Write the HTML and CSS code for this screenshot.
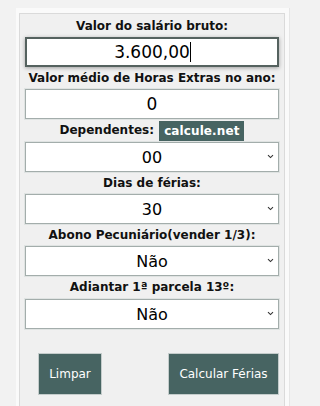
FILE: index.html
```html
<!DOCTYPE html>
<html lang="pt-BR">
<head>
<meta charset="utf-8">
<title>Calculadora de Férias</title>
<link rel="stylesheet" href="styles.css">
</head>
<body>
<div class="wrap">
  <form class="panel">
    <label class="lbl">Valor do salário bruto:</label>
    <div class="field">
      <input class="ctl ctl-focus" type="text" value="3.600,00">
      <span class="caret"></span>
    </div>
    <label class="lbl">Valor médio de Horas Extras no ano:</label>
    <input class="ctl" type="text" value="0">
    <label class="lbl lbl-badge">Dependentes: <span class="badge">calcule.net</span></label>
    <div class="field">
      <select class="ctl sel"><option>00</option></select>
      <svg class="chev" width="7" height="5" viewBox="0 0 7 5"><path d="M1 1.2 L3.5 3.6 L6 1.2" fill="none" stroke="#333" stroke-width="1.1"/></svg>
    </div>
    <label class="lbl">Dias de férias:</label>
    <div class="field">
      <select class="ctl sel"><option>30</option></select>
      <svg class="chev" width="7" height="5" viewBox="0 0 7 5"><path d="M1 1.2 L3.5 3.6 L6 1.2" fill="none" stroke="#333" stroke-width="1.1"/></svg>
    </div>
    <label class="lbl">Abono Pecuniário(vender 1/3):</label>
    <div class="field">
      <select class="ctl sel"><option>Não</option></select>
      <svg class="chev" width="7" height="5" viewBox="0 0 7 5"><path d="M1 1.2 L3.5 3.6 L6 1.2" fill="none" stroke="#333" stroke-width="1.1"/></svg>
    </div>
    <label class="lbl lbl-last">Adiantar 1ª parcela 13º:</label>
    <div class="field">
      <select class="ctl sel"><option>Não</option></select>
      <svg class="chev" width="7" height="5" viewBox="0 0 7 5"><path d="M1 1.2 L3.5 3.6 L6 1.2" fill="none" stroke="#333" stroke-width="1.1"/></svg>
    </div>
    <div class="buttons">
      <button type="button" class="btn btn-clear">Limpar</button>
      <button type="button" class="btn btn-calc">Calcular Férias</button>
    </div>
  </form>
</div>
</body>
</html>
```
FILE: styles.css
```css
html, body {
  margin: 0;
  padding: 0;
}
body {
  background: #f2f2f2;
  font-family: "DejaVu Sans", Verdana, sans-serif;
  color: #111;
  height: 406px;
  overflow: hidden;
}
.wrap {
  margin: 8px 0 0 16px;
  width: 274px;
  box-sizing: border-box;
  padding: 5px 4px 0 3px;
  background: #fafafa;
  border-right: 1px solid #e6e6e6;
}
.panel {
  display: flex;
  flex-direction: column;
  align-items: center;
  background: #f0f0f0;
  border: 1px solid #dadada;
  border-bottom: none;
  padding: 1px 0 0;
  height: 393px;
  box-sizing: border-box;
  margin: 0;
}
.lbl {
  display: block;
  height: 22px;
  line-height: 22px;
  font-size: 12px;
  font-weight: bold;
  text-align: center;
  white-space: nowrap;
}
.lbl-badge {
  height: 23px;
  line-height: 23px;
}
.lbl-last {
  height: 23px;
}
.badge {
  display: inline-block;
  background: #476462;
  color: #fff;
  height: 21px;
  line-height: 21px;
  padding: 0 5px;
  margin-left: 1px;
  font-size: 12px;
  letter-spacing: 0.1px;
  vertical-align: bottom;
}
.ctl {
  display: block;
  width: 254px;
  height: 30px;
  box-sizing: border-box;
  margin: 0;
  padding: 0 16px;
  border: 1px solid #a3adab;
  background: #fff;
  font-family: "DejaVu Sans", Verdana, sans-serif;
  font-size: 17px;
  color: #000;
  text-align: center;
  border-radius: 0;
  outline: none;
  box-shadow: 0 0 0 1px #dfe3e2;
}
.ctl-focus {
  border: 2px solid #55625f;
  box-shadow: 0 1px 4px rgba(0, 0, 0, 0.35);
}
.field {
  position: relative;
  width: 254px;
}
.caret {
  position: absolute;
  left: 165px;
  top: 5px;
  width: 1px;
  height: 20px;
  background: #000;
}
.sel {
  -webkit-appearance: none;
  appearance: none;
  font-size: 16px;
  text-align-last: center;
  padding: 0 18px;
}
.chev {
  position: absolute;
  right: 5px;
  top: 12px;
}
.buttons {
  display: flex;
  justify-content: space-between;
  width: 254px;
  box-sizing: border-box;
  padding-left: 13px;
  margin-top: 24px;
}
.btn {
  height: 42px;
  background: #476462;
  color: #fff;
  border: 1px solid #c4cccb;
  font-family: "DejaVu Sans", Verdana, sans-serif;
  font-size: 12px;
  padding: 0;
  margin: 0;
  border-radius: 0;
}
.btn-clear {
  width: 64px;
}
.btn-calc {
  width: 111px;
}
```
